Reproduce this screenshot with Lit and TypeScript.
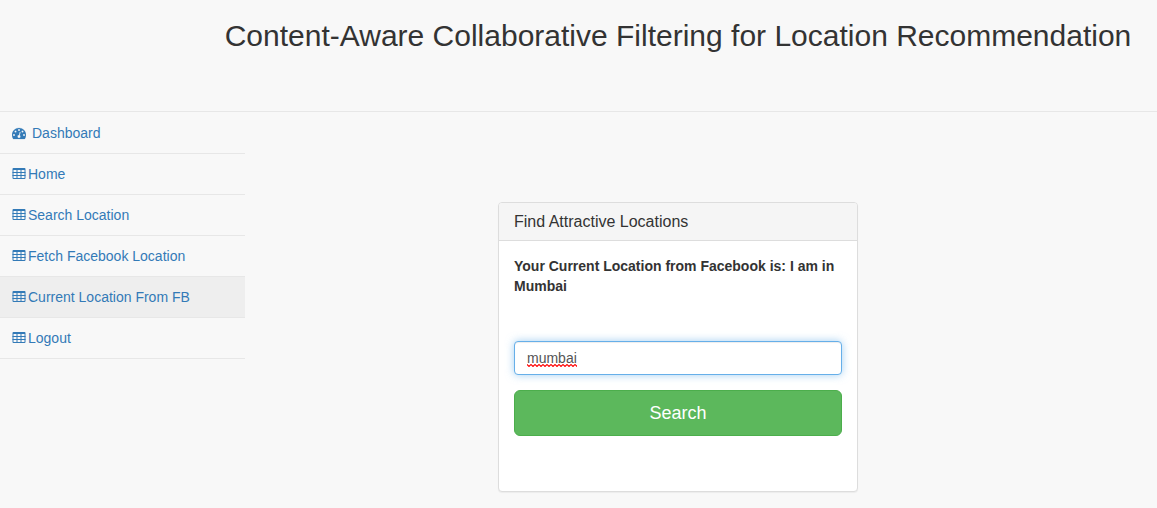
import { LitElement, html, svg, css } from "lit";
import { customElement, state } from "lit/decorators.js";
import { classMap } from "lit/directives/class-map.js";
import { styleMap } from "lit/directives/style-map.js";

interface MenuItem {
  label: string;
  icon: "gauge" | "table";
}

const MENU: MenuItem[] = [
  { label: "Dashboard", icon: "gauge" },
  { label: "Home", icon: "table" },
  { label: "Search Location", icon: "table" },
  { label: "Fetch Facebook Location", icon: "table" },
  { label: "Current Location From FB", icon: "table" },
  { label: "Logout", icon: "table" },
];

const FIELD_FONT = '14px "Liberation Sans", Arial, sans-serif';

/** Width in whole pixels that a text takes up inside the location field. */
function textWidth(text: string): number {
  const ctx = document.createElement("canvas").getContext("2d");
  if (!ctx) return 0;
  ctx.font = FIELD_FONT;
  return Math.round(ctx.measureText(text).width);
}

const gaugeIcon = html`<svg class="icon" viewBox="0 0 1792 1792" aria-hidden="true">
  ${svg`<path fill="currentColor" stroke="currentColor" stroke-width="24" d="M384 1152q0-53-37.5-90.5t-90.5-37.5-90.5 37.5-37.5 90.5 37.5 90.5 90.5 37.5 90.5-37.5 37.5-90.5zm192-448q0-53-37.5-90.5t-90.5-37.5-90.5 37.5-37.5 90.5 37.5 90.5 90.5 37.5 90.5-37.5 37.5-90.5zm428 481l101-382q6-26-7.5-48.5t-38.5-29.5-48 6.5-30 39.5l-101 382q-60 5-107 43.5t-63 98.5q-20 77 20 146t117 89 146-20 89-117q16-60-6-117t-72-91zm660-33q0-53-37.5-90.5t-90.5-37.5-90.5 37.5-37.5 90.5 37.5 90.5 90.5 37.5 90.5-37.5 37.5-90.5zm-640-640q0-53-37.5-90.5t-90.5-37.5-90.5 37.5-37.5 90.5 37.5 90.5 90.5 37.5 90.5-37.5 37.5-90.5zm448 192q0-53-37.5-90.5t-90.5-37.5-90.5 37.5-37.5 90.5 37.5 90.5 90.5 37.5 90.5-37.5 37.5-90.5zm320 448q0 261-141 483-19 29-54 29h-1402q-35 0-54-29-141-221-141-483 0-182 71-348t191-286 286-191 348-71 348 71 286 191 191 286 71 348z"/>`}
</svg>`;

const tableIcon = html`<svg class="icon" viewBox="0 0 14 14" aria-hidden="true">
  ${svg`<g fill="currentColor">
    <path d="M1.4 1H12.6Q13.5 1 13.5 2V3H.5V2Q.5 1 1.4 1z"/>
    <path d="M.5 5h13v1H.5zM.5 8h13v1H.5zM.5 11h13q0 1-1 1h-11q-1 0-1-1z"/>
    <path d="M.5 3h1v8h-1zM4.5 3h1v8h-1zM8.5 3h1v8h-1zM12.5 3h1v8h-1z"/>
  </g>`}
</svg>`;

@customElement("app-root")
export class AppRoot extends LitElement {
  @state() private current = "Current Location From FB";
  @state() private query = "mumbai";

  static styles = css`
    :host {
      display: block;
      min-height: 100vh;
      background: #f8f8f8;
      color: #333;
      font: 14px/20px "Liberation Sans", Arial, sans-serif;
    }
    *, *::before, *::after { box-sizing: border-box; }
    .header {
      padding: 19px 0 59px 199px;
      border-bottom: 1px solid #e7e7e7;
      text-align: center;
    }
    .title {
      margin: 0;
      font-size: 30px;
      font-weight: 500;
      line-height: 33px;
    }
    .layout { display: flex; align-items: flex-start; }
    .sidebar { flex: 0 0 245px; }
    .menu { margin: 0; padding: 1px 0 0; list-style: none; }
    .item { border-bottom: 1px solid #e7e7e7; }
    .link {
      display: flex;
      align-items: center;
      padding: 10px 12px;
      gap: 2px;
      color: #337ab7;
      text-decoration: none;
    }
    .link.wide { gap: 6px; }
    .link.active, .link:hover { background: #eee; }
    .icon { display: block; flex: none; width: 14px; height: 14px; }
    .main {
      flex: 1;
      display: flex;
      justify-content: center;
      padding: 90px 46px 16px 0;
    }
    .panel {
      width: 100%;
      max-width: 360px;
      background: #fff;
      border: 1px solid #ddd;
      border-radius: 4px;
      box-shadow: 0 1px 1px rgba(0, 0, 0, 0.05);
    }
    .heading {
      margin: 0;
      padding: 10px 15px;
      background: #f5f5f5;
      border-bottom: 1px solid #ddd;
      border-radius: 3px 3px 0 0;
      font-size: 16px;
      font-weight: 500;
      line-height: 17px;
    }
    .body {
      display: flex;
      flex-direction: column;
      gap: 45px;
      padding: 15px 15px 55px;
    }
    .note { font-weight: 700; }
    .form { display: flex; flex-direction: column; gap: 15px; }
    .control { position: relative; display: flex; }
    .field {
      width: 100%;
      height: 34px;
      padding: 6px 12px;
      border: 1px solid #66afe9;
      border-radius: 4px;
      outline: 0;
      background: #fff;
      box-shadow: inset 0 1px 1px rgba(0, 0, 0, 0.075), 0 0 8px rgba(102, 175, 233, 0.6);
      color: #555;
      font: inherit;
    }
    .squiggle {
      position: absolute;
      left: 13px;
      bottom: 8px;
      height: 3px;
      max-width: calc(100% - 26px);
      pointer-events: none;
    }
    .search {
      width: 100%;
      padding: 10px 16px;
      border: 1px solid #4cae4c;
      border-radius: 6px;
      background: #5cb85c;
      color: #fff;
      font-family: inherit;
      font-size: 18px;
      line-height: 24px;
      cursor: pointer;
    }
  `;

  private select(e: Event, label: string) {
    e.preventDefault();
    this.current = label;
  }

  render() {
    return html`
      <header class="header">
        <h1 class="title">Content-Aware Collaborative Filtering for Location Recommendation</h1>
      </header>
      <div class="layout">
        <nav class="sidebar">
          <ul class="menu">
            ${MENU.map(
              (m) => html`<li class="item">
                <a
                  href="#"
                  class=${classMap({ link: true, wide: m.icon === "gauge", active: m.label === this.current })}
                  @click=${(e: Event) => this.select(e, m.label)}
                  >${m.icon === "gauge" ? gaugeIcon : tableIcon}<span>${m.label}</span></a
                >
              </li>`
            )}
          </ul>
        </nav>
        <main class="main">
          <section class="panel">
            <h2 class="heading">Find Attractive Locations</h2>
            <div class="body">
              <div class="note">Your Current Location from Facebook is: I am in Mumbai</div>
              <form class="form" @submit=${(e: Event) => e.preventDefault()}>
                <div class="control">
                  <input
                    class="field"
                    type="text"
                    aria-label="Location"
                    spellcheck="false"
                    .value=${this.query}
                    @input=${(e: Event) => (this.query = (e.target as HTMLInputElement).value)}
                  />
                  <svg class="squiggle" aria-hidden="true" style=${styleMap({ width: `${textWidth(this.query)}px` })}>
                    <defs>
                      <pattern id="wave" width="4" height="3" patternUnits="userSpaceOnUse">
                        <path d="M-1 1.5L0 .5L2 2.5L4 .5L5 1.5" fill="none" stroke="#f00" stroke-width="1.1" />
                      </pattern>
                    </defs>
                    <rect width="100%" height="3" fill="url(#wave)" />
                  </svg>
                </div>
                <button class="search" type="submit">Search</button>
              </form>
            </div>
          </section>
        </main>
      </div>
    `;
  }
}
